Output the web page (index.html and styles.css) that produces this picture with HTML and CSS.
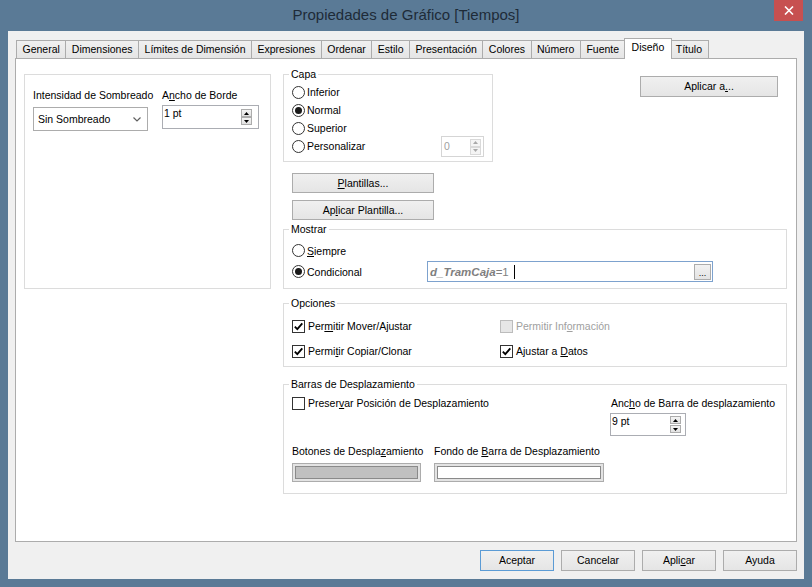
FILE: index.html
```html
<!DOCTYPE html>
<html lang="es">
<head>
<meta charset="utf-8">
<title>Propiedades de Gráfico</title>
<link rel="stylesheet" href="styles.css">
</head>
<body>
<div class="window">
  <div class="titlebar">
    <div class="title">Propiedades de Gráfico [Tiempos]</div>
    <div class="close"><svg width="10" height="9" viewBox="0 0 10 9"><path d="M1 0.5 L9 8.5 M9 0.5 L1 8.5" stroke="#fff" stroke-width="1.6" fill="none"/></svg></div>
  </div>
  <div class="client">
    <div class="tabs">
      <div class="tab">General</div>
      <div class="tab">Dimensiones</div>
      <div class="tab">Límites de Dimensión</div>
      <div class="tab">Expresiones</div>
      <div class="tab">Ordenar</div>
      <div class="tab">Estilo</div>
      <div class="tab">Presentación</div>
      <div class="tab">Colores</div>
      <div class="tab">Número</div>
      <div class="tab">Fuente</div>
      <div class="tab active">Diseño</div>
      <div class="tab">Título</div>
    </div>
    <div class="panel">
      <div class="group lgroup">
        <div class="field f-shade">
          <div class="lbl">Intensidad de Sombreado</div>
          <div class="combo"><span>Sin Sombreado</span><svg width="8" height="5" viewBox="0 0 8 5"><path d="M0.5 0.5 L4 4 L7.5 0.5" fill="none" stroke="#606060" stroke-width="1.2"/></svg></div>
        </div>
        <div class="field f-border">
          <div class="lbl">A<u>n</u>cho de Borde</div>
          <div class="spin spin-border"><span>1 pt</span><div class="spin-btns"><div class="sbtn"><svg width="5" height="3" viewBox="0 0 5 3"><path d="M0 3H5L2.5 0Z"/></svg></div><div class="sbtn"><svg width="5" height="3" viewBox="0 0 5 3"><path d="M0 0H5L2.5 3Z"/></svg></div></div></div>
        </div>
      </div>
      <div class="rcol">
        <div class="toprow">
          <div class="group capa">
            <div class="legend">Capa</div>
            <div class="opt"><span class="radio"></span>Inferior</div>
            <div class="opt"><span class="radio on"></span>Normal</div>
            <div class="opt"><span class="radio"></span>Superior</div>
            <div class="opt"><span class="radio"></span>Personalizar
              <div class="spin spin-dis"><span>0</span><div class="spin-btns"><div class="sbtn"><svg width="5" height="3" viewBox="0 0 5 3"><path d="M0 3H5L2.5 0Z"/></svg></div><div class="sbtn"><svg width="5" height="3" viewBox="0 0 5 3"><path d="M0 0H5L2.5 3Z"/></svg></div></div></div>
            </div>
          </div>
          <div class="btn btn-applyto">Aplicar a<u>.</u>..</div>
        </div>
        <div class="btn btn-tpl"><u>P</u>lantillas...</div>
        <div class="btn btn-tpl btn-tpl2">Ap<u>l</u>icar Plantilla...</div>
        <div class="group mostrar">
          <div class="legend">Mostrar</div>
          <div class="mrow"><div class="opt"><span class="radio"></span><span><u>S</u>iempre</span></div></div>
          <div class="mrow">
            <div class="opt cond"><span class="radio on"></span>Condicional</div>
            <div class="expr"><b>d_TramCaja</b><span>=1</span><span class="caret"></span><div class="ellipsis">...</div></div>
          </div>
        </div>
        <div class="group opciones">
          <div class="legend">Opciones</div>
          <div class="opt"><span class="chk"><svg width="11" height="11" viewBox="0 0 11 11"><path d="M1.8 5.6 L4.3 8.2 L9.3 2.4" fill="none" stroke="#000" stroke-width="1.8"/></svg></span><span>Per<u>m</u>itir Mover/Ajustar</span></div>
          <div class="opt dis"><span class="chk chk-dis"></span><span>Permitir Inf<u>o</u>rmación</span></div>
          <div class="opt"><span class="chk"><svg width="11" height="11" viewBox="0 0 11 11"><path d="M1.8 5.6 L4.3 8.2 L9.3 2.4" fill="none" stroke="#000" stroke-width="1.8"/></svg></span><span>Permi<u>t</u>ir Copiar/Clonar</span></div>
          <div class="opt"><span class="chk"><svg width="11" height="11" viewBox="0 0 11 11"><path d="M1.8 5.6 L4.3 8.2 L9.3 2.4" fill="none" stroke="#000" stroke-width="1.8"/></svg></span><span>Ajustar a <u>D</u>atos</span></div>
        </div>
        <div class="group barras">
          <div class="legend">Barras de Desplazamiento</div>
          <div class="btop">
            <div class="opt preserve"><span class="chk"></span><span>Preser<u>v</u>ar Posición de Desplazamiento</span></div>
            <div class="bright">
              <div class="blbl">Anc<u>h</u>o de Barra de desplazamiento</div>
              <div class="spin spin-bar"><span>9 pt</span><div class="spin-btns"><div class="sbtn"><svg width="5" height="3" viewBox="0 0 5 3"><path d="M0 3H5L2.5 0Z"/></svg></div><div class="sbtn"><svg width="5" height="3" viewBox="0 0 5 3"><path d="M0 0H5L2.5 3Z"/></svg></div></div></div>
            </div>
          </div>
          <div class="bbottom">
            <div class="swcol sw1">
              <div class="blbl">Botones de Despla<u>z</u>amiento</div>
              <div class="swatch"><div class="fill fill-gray"></div></div>
            </div>
            <div class="swcol sw2">
              <div class="blbl">Fondo de <u>B</u>arra de Desplazamiento</div>
              <div class="swatch"><div class="fill fill-white"></div></div>
            </div>
          </div>
        </div>
      </div>
    </div>
    <div class="footer">
      <div class="btn fbtn default">Aceptar</div>
      <div class="btn fbtn">Cancelar</div>
      <div class="btn fbtn">Apli<u>c</u>ar</div>
      <div class="btn fbtn">Ayuda</div>
    </div>
  </div>
</div>
</body>
</html>
```

FILE: styles.css
```css
* { box-sizing: border-box; }
body {
  margin: 0;
  background: #5a7a96;
  font-family: "Liberation Sans", Arial, sans-serif;
  font-size: 10.5px;
  color: #000;
}
u { text-underline-offset: 1px; }
.window { width: 812px; height: 587px; display: flex; flex-direction: column; }
.titlebar {
  height: 31px; flex: none; position: relative;
  display: flex; align-items: center; justify-content: center;
}
.title { font-size: 15px; line-height: 18px; color: #1e2b38; margin-top: -1px; }
.close {
  position: absolute; top: 0; right: 9px; width: 29px; height: 21px;
  background: #c75050; display: flex; align-items: center; justify-content: center;
}
.client {
  flex: 1; margin: 0 8px 8px; background: #f0f0f0;
  padding: 7px 7px 0; display: flex; flex-direction: column;
}
.tabs {
  height: 20px; flex: none; display: flex; align-items: flex-end;
  padding-left: 1px; position: relative; z-index: 2;
}
.tab {
  height: 18px; padding: 0 5.5px; border: 1px solid #acacac; border-bottom: none;
  background: linear-gradient(#f0f0f0, #e5e5e5);
  display: flex; align-items: center; line-height: 13px; white-space: nowrap;
}
.tab + .tab { margin-left: -1px; }
.tab.active {
  height: 21px; margin: 0 -2px -1px -2px; padding: 2px 7px 0;
  align-items: flex-start; background: #fff; position: relative; z-index: 1;
}
.panel {
  height: 484px; flex: none; background: #fff; border: 1px solid #acacac;
  display: flex; align-items: flex-start; padding: 15px 0 0 8px;
}
.group { position: relative; border: 1px solid #dcdcdc; }
.legend {
  position: absolute; top: -7px; left: 5px; padding: 0 2px;
  background: #fff; line-height: 13px; white-space: nowrap;
}
.lgroup {
  width: 247px; height: 215px; flex: none;
  padding: 14px 0 0 8px; display: flex; gap: 14px;
}
.field { display: flex; flex-direction: column; }
.lbl { line-height: 13px; white-space: nowrap; }
.f-shade { width: 115px; }
.combo {
  margin-top: 5px; width: 115px; height: 24px; border: 1px solid #acacac;
  background: #fff; display: flex; align-items: center; justify-content: space-between;
  padding: 0 6px 0 4px;
}
.spin {
  display: flex; justify-content: space-between; align-items: flex-start;
  background: #fff; border: 1px solid #abadb3;
}
.spin > span { padding: 1px 0 0 1px; line-height: 13px; }
.spin-btns { display: flex; flex-direction: column; }
.sbtn {
  width: 11px; height: 8px; border: 1px solid #acacac;
  background: linear-gradient(#f4f4f4, #e2e2e2);
  display: flex; align-items: center; justify-content: center;
}
.sbtn svg { fill: #000; display: block; }
.spin-border { margin-top: 3px; width: 97px; height: 24px; }
.spin-border .spin-btns { margin: 3px 6px 0 0; }
.spin-dis { margin-left: auto; width: 43px; height: 21px; border-color: #d5d5d5; }
.spin-dis > span { color: #a0a0a0; padding: 3px 0 0 2px; }
.spin-dis .spin-btns { margin: 2px 2px 0 0; }
.spin-dis .sbtn { border-color: #d9d9d9; background: #f4f4f4; }
.spin-dis .sbtn svg { fill: #a8a8a8; }
.spin-bar { margin-top: 1px; width: 76px; height: 23px; }
.spin-bar .spin-btns { margin: 2px 4px 0 0; gap: 1px; }

.rcol { margin-left: 12px; width: 504px; flex: none; display: flex; flex-direction: column; }
.toprow { display: flex; align-items: flex-start; }
.capa { width: 210px; height: 88px; padding: 8px 8px 0; }
.opt { height: 18px; display: flex; align-items: center; white-space: nowrap; }
.radio {
  width: 13px; height: 13px; flex: none; border: 1px solid #333; border-radius: 50%;
  background: #fff; margin-right: 2px; display: flex; align-items: center; justify-content: center;
}
.radio.on::after { content: ""; width: 7px; height: 7px; border-radius: 50%; background: #1a1a1a; }
.btn {
  display: flex; align-items: center; justify-content: center; line-height: 13px;
  border: 1px solid #acacac; background: linear-gradient(#f0f0f0, #e5e5e5); white-space: nowrap;
}
.btn-applyto { width: 138px; height: 21px; margin: 2px 9px 0 auto; }
.btn-tpl { width: 142px; height: 20px; margin: 11px 0 0 9px; }
.btn-tpl2 { margin-top: 7px; }
.mostrar { margin-top: 9px; height: 60px; padding: 10px 8px 0; }
.mrow { height: 21px; display: flex; align-items: center; }
.cond { width: 135px; flex: none; }
.expr {
  width: 286px; height: 21px; border: 1px solid #7da2ce; background: #fff;
  display: flex; align-items: center; padding-left: 2px;
  font-size: 11.5px; color: #7f7f7f;
}
.expr b { font-style: italic; font-weight: bold; }
.caret { width: 1px; height: 14px; background: #000; margin-left: 5px; }
.ellipsis {
  margin-left: auto; margin-right: 1px; width: 17px; height: 16px;
  border: 1px solid #acacac; background: linear-gradient(#f2f2f2, #e3e3e3);
  display: flex; align-items: flex-end; justify-content: center;
  font-size: 9px; line-height: 11px; color: #000;
}
.opciones {
  margin-top: 14px; height: 64px; padding: 13px 8px 0;
  display: grid; grid-template-columns: 208px 1fr; grid-auto-rows: 18px; row-gap: 7px;
}
.chk {
  width: 13px; height: 13px; flex: none; border: 1px solid #333; background: #fff;
  margin-right: 3px; display: flex; align-items: center; justify-content: center;
}
.chk svg { display: block; }
.chk-dis { border-color: #bcbcbc; background: #e6e6e6; }
.dis { color: #a0a0a0; }
.barras { margin-top: 17px; height: 110px; padding: 9px 8px 0; }
.btop { display: flex; }
.preserve { width: 318px; flex: none; }
.bright { display: flex; flex-direction: column; }
.blbl { line-height: 18px; white-space: nowrap; padding-left: 1px; }
.bbottom { display: flex; gap: 13px; margin-top: 6px; }
.bbottom .blbl { padding-left: 0; }
.swcol { flex: none; display: flex; flex-direction: column; }
.sw1 { width: 129px; }
.sw2 { width: 170px; }
.swatch {
  margin-top: 3px; height: 19px; border: 1px solid #acacac;
  background: #e3e3e3; padding: 2px;
}
.fill { height: 100%; border: 1px solid #8a8a8a; }
.fill-gray { background: #c0c0c0; }
.fill-white { background: #fff; }
.footer { display: flex; justify-content: flex-end; gap: 7px; margin-top: 8px; }
.fbtn { width: 74px; height: 21px; }
.default { border-color: #5b9bd5; }
```
